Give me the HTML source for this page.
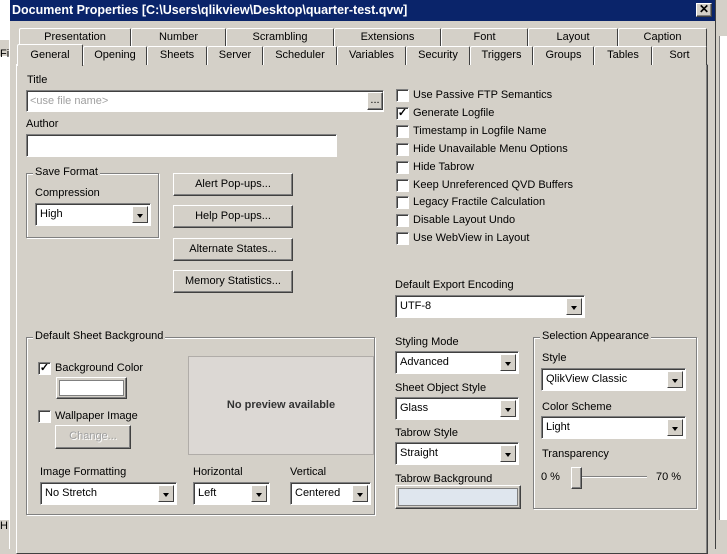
<!DOCTYPE html>
<html><head><meta charset="utf-8"><style>
*{box-sizing:border-box;margin:0;padding:0}
body{width:727px;height:549px;overflow:hidden;background:#d4d0c8;font-family:"Liberation Sans",sans-serif;font-size:11px;color:#000;position:relative}
.a{position:absolute;white-space:nowrap}
.sunk{position:absolute;background:#fff;border:1px solid;border-color:#808080 #fff #fff #808080;box-shadow:inset 1px 1px 0 #404040}
.btn{position:absolute;background:#d4d0c8;border:1px solid;border-color:#fff #404040 #404040 #fff;box-shadow:inset -1px -1px 0 #808080;text-align:center}
.grp{position:absolute;border:1px solid #808080;box-shadow:1px 1px 0 #fff, inset 1px 1px 0 #fff}
.grp>span{position:absolute;top:-8px;left:6px;background:#d4d0c8;padding:0 2px}
.tab{position:absolute;height:19px;border:1px solid;border-color:#fff #404040 transparent #fff;border-bottom:none;border-radius:2px 2px 0 0;text-align:center;line-height:17px;background:#d4d0c8}
.cb{position:absolute;width:13px;height:13px;background:#fff;border:1px solid;border-color:#808080 #fff #fff #808080;box-shadow:inset 1px 1px 0 #404040;font-size:11px;line-height:11px;text-align:center;font-weight:bold}
.arr{position:absolute;right:2px;top:2px;bottom:2px;width:16px;background:#d4d0c8;border:1px solid;border-color:#fff #404040 #404040 #fff}
.arr:after{content:"";position:absolute;left:4px;top:7px;border:3.5px solid transparent;border-top:4px solid #000;border-bottom:none}
.cmb{padding:3px 4px;line-height:15px}
</style></head><body>
<div class="a" style="left:0;top:0;width:9px;height:549px;background:#fff"></div>
<div class="a" style="left:0;top:40px;width:9px;height:16px;background:#d4d0c8"></div>
<div class="a" style="left:0;top:48px;width:9px;font-size:11px">Fi</div>
<div class="a" style="left:0;top:520px;width:9px;height:29px;background:#d4d0c8;font-size:11px">H</div>
<div class="a" style="left:716px;top:0;width:11px;height:549px;background:#d4d0c8"></div>
<div class="a" style="left:719px;top:36px;width:8px;height:484px;background:#fff;border-left:1px solid #808080"></div>
<div class="a" style="left:9px;top:0;width:707px;height:549px;border-left:1px solid #fff;border-right:1px solid #404040;background:#d4d0c8"></div>
<div class="a" style="left:10px;top:0;width:705px;height:21px;background:#0a246a;color:#fff;font-weight:bold;font-size:12.5px;line-height:21px;padding-left:2px">Document Properties [C:\Users\qlikview\Desktop\quarter-test.qvw]</div>
<div class="btn" style="left:696px;top:3px;width:16px;height:14px;font-size:12px;line-height:11px;font-weight:bold">✕</div>

<div class="tab" style="left:19px;top:28px;width:112px">Presentation</div>
<div class="tab" style="left:131px;top:28px;width:95px">Number</div>
<div class="tab" style="left:226px;top:28px;width:108px">Scrambling</div>
<div class="tab" style="left:334px;top:28px;width:107px">Extensions</div>
<div class="tab" style="left:441px;top:28px;width:87px">Font</div>
<div class="tab" style="left:528px;top:28px;width:90px">Layout</div>
<div class="tab" style="left:618px;top:28px;width:89px">Caption</div>

<div class="a" style="left:16px;top:64px;width:692px;height:490px;border:1px solid;border-color:#fff #404040 #404040 #fff;box-shadow:inset -1px 0 0 #808080"></div>
<div class="tab" style="left:83px;top:46px;width:64px">Opening</div>
<div class="tab" style="left:147px;top:46px;width:60px">Sheets</div>
<div class="tab" style="left:207px;top:46px;width:56px">Server</div>
<div class="tab" style="left:263px;top:46px;width:74px">Scheduler</div>
<div class="tab" style="left:337px;top:46px;width:69px">Variables</div>
<div class="tab" style="left:406px;top:46px;width:64px">Security</div>
<div class="tab" style="left:470px;top:46px;width:63px">Triggers</div>
<div class="tab" style="left:533px;top:46px;width:61px">Groups</div>
<div class="tab" style="left:594px;top:46px;width:58px">Tables</div>
<div class="tab" style="left:652px;top:46px;width:55px">Sort</div>
<div class="tab" style="left:17px;top:44px;width:66px;height:22px;line-height:20px;border-bottom:none">General</div>

<div class="a" style="left:27px;top:74px">Title</div>
<div class="sunk" style="left:26px;top:90px;width:358px;height:22px;color:#a0a0a0;padding:3px 3px;line-height:14px">&lt;use file name&gt;</div>
<div class="btn" style="left:367px;top:92px;width:16px;height:18px;line-height:14px">...</div>
<div class="a" style="left:26px;top:118px">Author</div>
<div class="sunk" style="left:26px;top:134px;width:311px;height:23px"></div>

<div class="grp" style="left:26px;top:173px;width:133px;height:65px"><span>Save Format</span></div>
<div class="a" style="left:35px;top:187px">Compression</div>
<div class="sunk cmb" style="left:35px;top:203px;width:116px;height:23px">High<div class="arr"></div></div>

<div class="btn" style="left:173px;top:173px;width:120px;height:23px;line-height:20px">Alert Pop-ups...</div>
<div class="btn" style="left:173px;top:205px;width:120px;height:23px;line-height:20px">Help Pop-ups...</div>
<div class="btn" style="left:173px;top:238px;width:120px;height:23px;line-height:20px">Alternate States...</div>
<div class="btn" style="left:173px;top:270px;width:120px;height:23px;line-height:20px">Memory Statistics...</div>

<div class="cb" style="left:396px;top:89px"></div><div class="a" style="left:413px;top:89px">Use Passive FTP Semantics</div>
<div class="cb" style="left:396px;top:107px">✓</div><div class="a" style="left:413px;top:107px">Generate Logfile</div>
<div class="cb" style="left:396px;top:125px"></div><div class="a" style="left:413px;top:125px">Timestamp in Logfile Name</div>
<div class="cb" style="left:396px;top:143px"></div><div class="a" style="left:413px;top:143px">Hide Unavailable Menu Options</div>
<div class="cb" style="left:396px;top:161px"></div><div class="a" style="left:413px;top:161px">Hide Tabrow</div>
<div class="cb" style="left:396px;top:179px"></div><div class="a" style="left:413px;top:179px">Keep Unreferenced QVD Buffers</div>
<div class="cb" style="left:396px;top:196px"></div><div class="a" style="left:413px;top:196px">Legacy Fractile Calculation</div>
<div class="cb" style="left:396px;top:214px"></div><div class="a" style="left:413px;top:214px">Disable Layout Undo</div>
<div class="cb" style="left:396px;top:232px"></div><div class="a" style="left:413px;top:232px">Use WebView in Layout</div>

<div class="a" style="left:395px;top:279px">Default Export Encoding</div>
<div class="sunk cmb" style="left:395px;top:295px;width:190px;height:23px">UTF-8<div class="arr"></div></div>

<div class="grp" style="left:26px;top:337px;width:349px;height:178px"><span>Default Sheet Background</span></div>
<div class="cb" style="left:38px;top:362px">✓</div><div class="a" style="left:55px;top:362px">Background Color</div>
<div class="btn" style="left:56px;top:377px;width:71px;height:22px;padding:2px"><div style="width:100%;height:100%;background:#fff;border:1px solid #808080"></div></div>
<div class="cb" style="left:38px;top:410px"></div><div class="a" style="left:55px;top:410px">Wallpaper Image</div>
<div class="btn" style="left:55px;top:425px;width:76px;height:24px;line-height:21px;color:#a0a0a0;text-shadow:1px 1px 0 #fff">Change...</div>
<div class="a" style="left:188px;top:356px;width:186px;height:99px;background:#dcd8d4;border:1px solid #b0aca8;text-align:center;line-height:97px;font-weight:bold;color:#333">No preview available</div>
<div class="a" style="left:40px;top:466px">Image Formatting</div>
<div class="a" style="left:193px;top:466px">Horizontal</div>
<div class="a" style="left:290px;top:466px">Vertical</div>
<div class="sunk cmb" style="left:40px;top:482px;width:137px;height:23px">No Stretch<div class="arr"></div></div>
<div class="sunk cmb" style="left:193px;top:482px;width:77px;height:23px">Left<div class="arr"></div></div>
<div class="sunk cmb" style="left:290px;top:482px;width:81px;height:23px">Centered<div class="arr"></div></div>

<div class="a" style="left:395px;top:336px">Styling Mode</div>
<div class="sunk cmb" style="left:395px;top:351px;width:124px;height:23px">Advanced<div class="arr"></div></div>
<div class="a" style="left:395px;top:382px">Sheet Object Style</div>
<div class="sunk cmb" style="left:395px;top:397px;width:124px;height:23px">Glass<div class="arr"></div></div>
<div class="a" style="left:395px;top:427px">Tabrow Style</div>
<div class="sunk cmb" style="left:395px;top:442px;width:124px;height:23px">Straight<div class="arr"></div></div>
<div class="a" style="left:395px;top:473px">Tabrow Background</div>
<div class="btn" style="left:395px;top:485px;width:126px;height:24px;padding:2px"><div style="width:100%;height:100%;background:#dfe6ee;border:1px solid #808080"></div></div>

<div class="grp" style="left:533px;top:337px;width:164px;height:172px"><span>Selection Appearance</span></div>
<div class="a" style="left:542px;top:352px">Style</div>
<div class="sunk cmb" style="left:541px;top:368px;width:145px;height:23px">QlikView Classic<div class="arr"></div></div>
<div class="a" style="left:542px;top:401px">Color Scheme</div>
<div class="sunk cmb" style="left:541px;top:416px;width:145px;height:23px">Light<div class="arr"></div></div>
<div class="a" style="left:542px;top:448px">Transparency</div>
<div class="a" style="left:541px;top:471px">0 %</div>
<div class="a" style="left:571px;top:476px;width:76px;height:2px;border-top:1px solid #808080;border-bottom:1px solid #fff"></div>
<div class="btn" style="left:571px;top:467px;width:11px;height:22px"></div>
<div class="a" style="left:656px;top:471px">70 %</div>
</body></html>
